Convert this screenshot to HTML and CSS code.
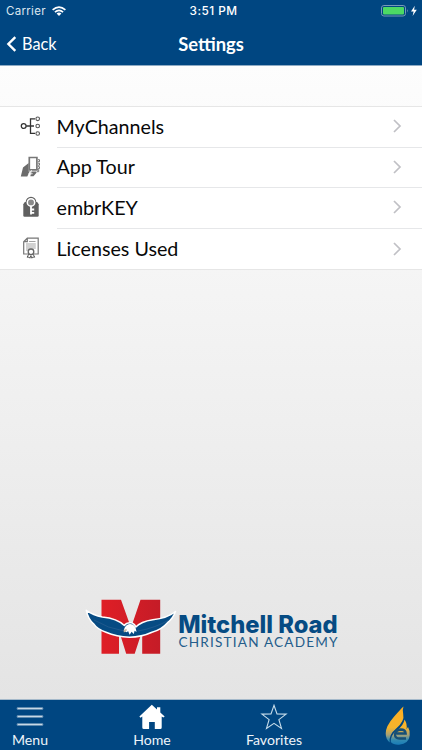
FILE: index.html
```html
<!DOCTYPE html>
<html lang="en">
<head>
<meta charset="utf-8">
<title>Settings</title>
<link rel="stylesheet" href="styles.css">
</head>
<body>
<div class="app">
  <header class="header">
    <div class="status">
      <div class="carrier"><span>Carrier</span>
        <svg width="14" height="10" viewBox="0 0 14 10" fill="none" stroke="#fff" stroke-width="1.7"><path d="M.6 3.8Q7-1.7 13.4 3.8M2.9 6.2Q7 2.7 11.1 6.2"/><path d="M4.6 7.5Q7 5.7 9.4 7.5L7 10Z" fill="#fff" stroke="none"/></svg>
      </div>
      <div class="time">3:51 PM</div>
      <svg class="battery" width="37" height="12" viewBox="0 0 37 12"><rect x=".5" y=".5" width="24" height="10.5" rx="2.4" fill="none" stroke="#7799b8"/><rect x="2" y="2" width="21" height="7.5" rx="1" fill="#4cd964"/><path d="M26 4q1.6 1.7 0 3.5z" fill="#7799b8"/><path d="M33.8.8 30 6.4h2.6L31.6 11l4.2-6.2h-2.7z" fill="#fff"/></svg>
    </div>
    <nav class="nav">
      <a class="back"><svg width="11" height="16" viewBox="0 0 11 16"><path d="M9.3 1.2 2.4 8l6.9 6.8" fill="none" stroke="#fff" stroke-width="2.4"/></svg><span>Back</span></a>
      <h1 class="title">Settings</h1>
    </nav>
  </header>
  <main class="content">
    <ul class="list">
      <li class="row">
        <svg class="icon" width="22" height="22" viewBox="0 0 22 22" fill="none" stroke="#333" stroke-width="1.1"><circle cx="3.7" cy="11" r="2.4" stroke-width="1.3"/><path d="M6.2 11H14M15 3.8h-4.5v14.5H15" stroke-width="1.3"/><g stroke="#555"><circle cx="17.7" cy="3.8" r="1.8"/><circle cx="17.7" cy="11" r="1.8"/><circle cx="17.7" cy="18.5" r="1.8"/></g></svg>
        <div class="cell"><span>MyChannels</span><svg class="chevron" width="9" height="14" viewBox="0 0 9 14"><path d="m1 1 6 6-6 6"/></svg></div>
      </li>
      <li class="row">
        <svg class="icon" width="22" height="22" viewBox="0 0 22 22"><path d="M.8 20.5 3 11.5 8.7 7v8.5h7.8v1.3l-3 3.5h-3.2l1-4-2.3.5-1.7 3.7z" fill="#6c6c6c"/><path d="M9.3 13.8V1.5h7.6v12.3z" fill="#fff" stroke="#777" stroke-width="1.7"/><path d="M18 3.7h1.5v2H18m0 1.5h1.5v2H18m0 1.5h1.5v2H18m-1 1h1.7v2H17" fill="none" stroke="#777"/><path d="m8.6 17.3 2.9-2.8-1.2 3.4 2.3-.2" fill="none" stroke="#eee"/></svg>
        <div class="cell"><span>App Tour</span><svg class="chevron" width="9" height="14" viewBox="0 0 9 14"><path d="m1 1 6 6-6 6"/></svg></div>
      </li>
      <li class="row">
        <svg class="icon" width="22" height="22" viewBox="0 0 22 22"><path d="M4.8 6h12.4l1.5 2.2v11.3q0 1.3-1.3 1.3H4.6q-1.3 0-1.3-1.3V8.2z" fill="#606060"/><circle cx="11" cy="6" r="5.3" fill="#606060"/><circle cx="11" cy="6.4" r="3.7" fill="#8a8a8a" stroke="#fff" stroke-width="1.5"/><path d="M11 10v8.6M11.4 13.5h2.8M11.4 16.8h2.8" stroke="#fff" stroke-width="1.8"/></svg>
        <div class="cell"><span>embrKEY</span><svg class="chevron" width="9" height="14" viewBox="0 0 9 14"><path d="m1 1 6 6-6 6"/></svg></div>
      </li>
      <li class="row">
        <svg class="icon" width="22" height="22" viewBox="0 0 22 22" fill="none" stroke="#777"><path d="M8 17H3.7V4.7l3.6-3.5h10.9V17H14M3.8 4.7h3.5V1.5" stroke-width="1.2"/><path d="M9 4.5h6.5M6 7h9.8M6 9h9.8M6 11h9.8M6 13h3" stroke="#999" stroke-width=".9"/><circle cx="11" cy="14.8" r="2.8" fill="#fff" stroke="#666" stroke-width="1.3"/><path d="m8.9 17-1.8 3.2 2-.1.8 1.1 1-2.5 1 2.5.8-1.1 2 .1-1.7-3.2" stroke="#555"/></svg>
        <div class="cell"><span>Licenses Used</span><svg class="chevron" width="9" height="14" viewBox="0 0 9 14"><path d="m1 1 6 6-6 6"/></svg></div>
      </li>
    </ul>
    <svg class="logo" width="260" height="64" viewBox="81 595 260 64">
      <defs><linearGradient id="red" x2="1"><stop stop-color="#df1e26"/><stop offset="1" stop-color="#c51c27"/></linearGradient></defs>
      <path d="M101.5 599.7H121l10 28 9.5-28h19.7v54h-18v-23l-7.5 23h-8.5l-7.2-23v23h-17.5z" fill="url(#red)"/>
      <path d="M86.3 610.3q7 5 16 6.7 15 1.5 22 8.5 2-3 6.5-2.8 3.5.4 5 4.3 5-5.5 17-7.3 14.5-1.4 22.7-8.2-2.5 7-8 11.2-6 7-15.5 9.5-10.5 4.8-22.5 5-13-.6-23.5-5-8.5-2.5-12.5-8.5-5.5-5-7.2-13.4Z" fill="#064b83" stroke="#fff" stroke-width="1.5" stroke-linejoin="round"/>
      <path d="M94 620q14 8.500 30 11M169 620q-14 8-31 11" fill="none" stroke="#386696" stroke-width=".5"/>
      <path d="M123.8 630q1.500-5.500 6-5.900 5.800-.3 6.800 7.800l-2-1.200-.8 3.400-2.200-2.400-2 3-1.400-3.400-2 1z" fill="#fff"/>
      <path d="m123.6 630 3-1.200v2l-2.700 1.600z" fill="#c8b9a0"/>
      <text class="logo-name" x="178.2" y="632.5" textLength="159.5" lengthAdjust="spacingAndGlyphs">Mitchell Road</text>
      <text class="logo-sub" x="178.5" y="646.5" textLength="159">CHRISTIAN ACADEMY</text>
    </svg>
  </main>
  <footer class="tabs">
    <a class="tab"><svg width="28" height="26" viewBox="0 0 28 26"><path d="M2 4.5h24M2 12.5h24M2 20.500h24" stroke="#80a2bf" stroke-width="2.7" stroke-linecap="round"/><path d="M2 4.500h24M2 12.500h24M2 20.500h24" stroke="#d0dee9" stroke-width=".9"/></svg><span>Menu</span></a>
    <a class="tab"><svg width="26" height="26" viewBox="0 0 26 26"><path d="M.4 12.5 12.8.8 18 5.4V3.2h3.3V8.5l4.4 4-1.4 1.1-1.6-1.1v11q0 1.500-1.500 1.500h-5.400v-7h-5.700v7H4.8q-1.500 0-1.500-1.500v-11l-1.800 1.200z" fill="#fff"/></svg><span>Home</span></a>
    <a class="tab"><svg width="28" height="26" viewBox="0 0 28 26"><path d="m14 1.3 3 8.6 9.1.2-7.2 5.5 2.6 8.8-7.5-5.1-7.5 5.1 2.6-8.8-7.2-5.500 9.100-.2z" fill="none" stroke="#c7ddeb" stroke-width="1.1"/></svg><span>Favorites</span></a>
    <svg class="flame" width="26" height="40" viewBox="0 0 26 40"><defs><linearGradient id="fire" gradientUnits="userSpaceOnUse" x1="0" y1="0" x2="0" y2="39"><stop stop-color="#ffae20"/><stop offset=".55" stop-color="#f5b42c"/><stop offset=".74" stop-color="#a6a177"/><stop offset=".87" stop-color="#318ab1"/><stop offset="1" stop-color="#167bb8"/></linearGradient></defs><path d="M18.5.5q-3.5 3.3-9.3 10Q.7 20 .7 27.5q0 5.5 4 9-1-8 6-13.500Q20 15 18.2 8.200 17 4.500 18.500.5Z" fill="url(#fire)"/><path d="M19.500 13.500q-1 6.200-7.500 10.700Q5.500 29 5.800 36 8.500 39 14 38.700q10-1 10.700-9.200.5-5-1.700-8.500l-1.500 2.200q1-5.200-2-9.700Z" fill="url(#fire)"/><path d="M11.300 27.500h9.400q-.3-4-5-4-5.500.5-5.700 5 0 4 4.500 4h6.500" fill="none" stroke="#164f76" stroke-width="2.3"/></svg>
  </footer>
</div>
</body>
</html>
```

FILE: styles.css
```css
* { box-sizing: border-box; }
body { margin: 0; font-family: Lato, sans-serif; color: #080808; }
.app { width: 422px; height: 750px; display: flex; flex-direction: column; overflow: hidden; }
.header { height: 66px; background: #004681; color: #fff; border-bottom: 1px solid #8eabc4; }
.status { height: 22px; display: grid; grid-template-columns: 1fr 100px 1fr; align-items: center; padding: 0 4px 0 6px; font: 11.5px/22px Inter, sans-serif; }
.carrier { display: flex; align-items: center; gap: 6px; color: #dce7f0; letter-spacing: .3px; }
.time { padding-left: 3px; text-align: center; font-weight: 500; font-size: 11.8px; letter-spacing: .45px; }
.battery { justify-self: end; }
.nav { height: 43px; display: grid; grid-template-columns: 1fr 100px 1fr; align-items: center; padding: 0 6px; }
.back { display: flex; align-items: center; gap: 5px; font-size: 16.3px; }
.title { margin: 0; text-align: center; font-size: 18.4px; font-weight: 700; line-height: 22px; }
.content { flex: 1; min-height: 0; display: flex; flex-direction: column; align-items: center; padding-top: 40px; background: linear-gradient(#fdfdfd, #f5f5f5 32%, #e4e4e4); }
.list { width: 100%; margin: 0; padding: 0; list-style: none; background: #fff; border-top: 1px solid #e6e6e6; border-bottom: 1px solid #e6e6e6; }
.row { height: 40.6px; display: flex; align-items: center; padding-left: 20px; }
.icon { flex: none; margin-right: 14.5px; margin-bottom: 2px; }
.cell { flex: 1; align-self: stretch; display: flex; align-items: center; justify-content: space-between; padding: 0 20px 1px 0; font-size: 19.7px; border-bottom: 1px solid #e6e7e9; }
.row:last-child .cell { border-bottom: 0; }
.chevron { fill: none; stroke: #c0c0c5; stroke-width: 1.7; }
.logo { margin-top: auto; margin-bottom: 40px; }
.logo-name { font: 800 24px Inter, sans-serif; fill: #064b83; }
.logo-sub { font: 13.6px Lato, sans-serif; fill: #245d8b; }
.tabs { height: 51px; display: grid; grid-template-columns: 60px 184px 60px 118px; border-top: 1px solid #a5b9ca; background: #004681; color: #eef4fa; }
.tab { display: flex; flex-direction: column; align-items: center; font-size: 14.1px; line-height: 17px; }
.tab svg { flex: none; margin: 4px 0 1px; }
.flame { justify-self: end; margin: 6px 11px 0 0; }
```
